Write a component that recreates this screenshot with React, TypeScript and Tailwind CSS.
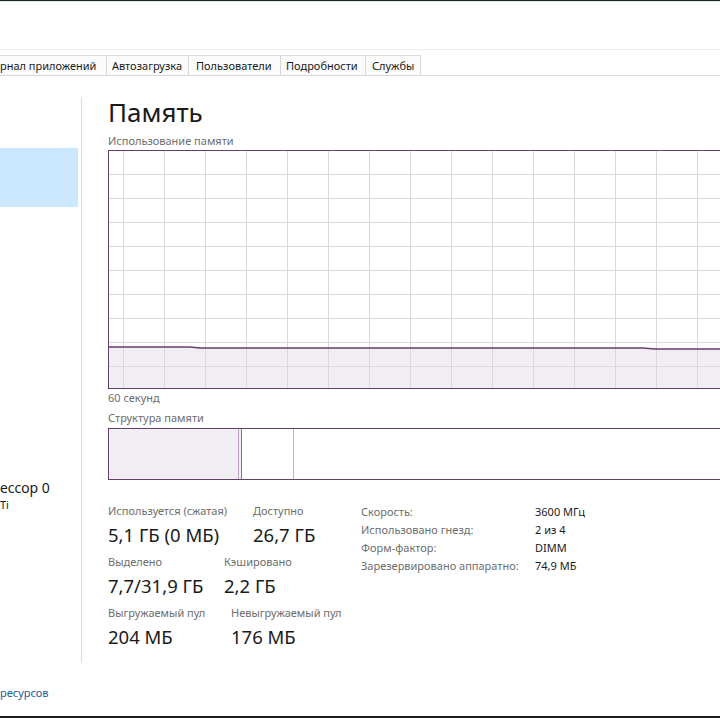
import React from "react";

const stats = [
  { cells: [
      { label: "Используется (сжатая)", value: "5,1 ГБ (0 МБ)", w: "w-[145px]" },
      { label: "Доступно", value: "26,7 ГБ", w: "" },
    ] },
  { cells: [
      { label: "Выделено", value: "7,7/31,9 ГБ", w: "w-[116px]" },
      { label: "Кэшировано", value: "2,2 ГБ", w: "" },
    ] },
  { cells: [
      { label: "Выгружаемый пул", value: "204 МБ", w: "w-[123px]" },
      { label: "Невыгружаемый пул", value: "176 МБ", w: "" },
    ] },
];

const specs = [
  ["Скорость:", "3600 МГц"],
  ["Использовано гнезд:", "2 из 4"],
  ["Форм-фактор:", "DIMM"],
  ["Зарезервировано аппаратно:", "74,9 МБ"],
];

const tabs = [
  { name: "рнал приложений", w: "w-[107px] pl-0" },
  { name: "Автозагрузка", w: "w-[82px] pl-[5px]" },
  { name: "Пользователи", w: "w-[92px] pl-[7px]" },
  { name: "Подробности", w: "w-[85px] pl-[5px]" },
  { name: "Службы", w: "w-[55px] pl-[6px]" },
];

function UsageGraph() {
  const vx = Array.from({ length: 16 }, (_, i) => 14 + i * 41);
  const hy = Array.from({ length: 9 }, (_, i) => 23 + i * 24);
  const line = "0,196 81,196 91,197 534,197 546,198 640,198";
  return (
    <svg width="638" height="237" className="block">
      <polygon points={`${line} 640,237 0,237`} fill="#f1eef3" />
      {vx.map((x) => (
        <line key={"v" + x} x1={x + 0.5} y1="0" x2={x + 0.5} y2="237" stroke="#dcd7dd" strokeWidth="1" />
      ))}
      {hy.map((y) => (
        <line key={"h" + y} x1="0" y1={y + 0.5} x2="640" y2={y + 0.5} stroke="#dcd7dd" strokeWidth="1" />
      ))}
      <polyline points={line} fill="none" stroke="#663e6b" strokeWidth="1.3" />
    </svg>
  );
}

export default function App() {
  return (
    <div className="w-[720px] h-[718px] bg-white overflow-hidden flex flex-col font-['Noto_Sans',sans-serif] text-[#1a1a1a]">
      <div className="h-px bg-[#1e2928] shrink-0" />
      <div className="h-px bg-[#dfe5e4] shrink-0" />
      <div className="h-[47px] shrink-0" />
      <div className="h-px bg-[#ececec] shrink-0" />
      <div className="h-[5px] shrink-0" />

      {/* tabs */}
      <div className="flex h-[21px] border-b border-[#d9d9d9] shrink-0">
        {tabs.map((t) => (
          <div
            key={t.name}
            className={`${t.w} h-[20px] border-t border-r border-[#d9d9d9] bg-[#fbfbfb] text-[11px] leading-[19px] whitespace-nowrap overflow-hidden`}
          >
            {t.name}
          </div>
        ))}
      </div>

      {/* body */}
      <div className="flex h-[587px] shrink-0">
        <div className="w-[81px] shrink-0 flex flex-col">
          <div className="mt-[72px] w-[78px] h-[59px] bg-[#cce8ff]" />
          <div className="mt-[272px] text-[14px] leading-[18px] whitespace-nowrap">ессор 0</div>
          <div className="mt-px text-[11px] leading-[13px]">Ti</div>
        </div>
        <div className="w-px mt-[21px] h-[566px] bg-[#dcdcdc] shrink-0" />

        <div className="pl-[26px] flex flex-col min-w-0">
          <div className="mt-[20px] text-[26px] leading-[32px]">Память</div>
          <div className="mt-[5px] text-[11px] leading-[16px] text-[#6d6d6d]">Использование памяти</div>
          <div className="mt-px w-[640px] h-[239px] border border-[#663e6b]">
            <UsageGraph />
          </div>
          <div className="mt-px text-[11px] leading-[16px] text-[#6d6d6d]">60 секунд</div>
          <div className="mt-[4px] text-[11px] leading-[16px] text-[#6d6d6d]">Структура памяти</div>
          <div className="mt-[2px] w-[640px] h-[52px] border border-[#663e6b] flex">
            <div className="w-[130px] bg-[#f1eef3] border-r border-[#bca4c0]" />
            <div className="w-[3px] bg-[#f1eef3] border-r border-[#8c6c90]" />
            <div className="w-[52px] border-r border-[#c4b0c7]" />
            <div className="flex-1" />
          </div>

          <div className="mt-[23px] flex">
            <div className="w-[253px] flex flex-col gap-[7px]">
              {stats.map((row, i) => (
                <div key={i} className="flex">
                  {row.cells.map((c) => (
                    <div key={c.label} className={`${c.w} shrink-0 whitespace-nowrap`}>
                      <div className="text-[11px] leading-[16px] text-[#6d6d6d]">{c.label}</div>
                      <div className="mt-[4px] text-[18.5px] leading-[24px]">{c.value}</div>
                    </div>
                  ))}
                </div>
              ))}
            </div>
            <div className="flex flex-col">
              {specs.map(([k, v]) => (
                <div key={k} className="flex text-[11px] leading-[18px] whitespace-nowrap">
                  <div className="w-[174px] text-[#6d6d6d]">{k}</div>
                  <div>{v}</div>
                </div>
              ))}
            </div>
          </div>
        </div>
      </div>

      {/* footer */}
      <div className="h-[53px] shrink-0 pt-[22px]">
        <div className="text-[11px] leading-[16px] text-[#1e5b9a]">ресурсов</div>
      </div>
      <div className="h-[2px] bg-[#1e1e1e] shrink-0" />
    </div>
  );
}
